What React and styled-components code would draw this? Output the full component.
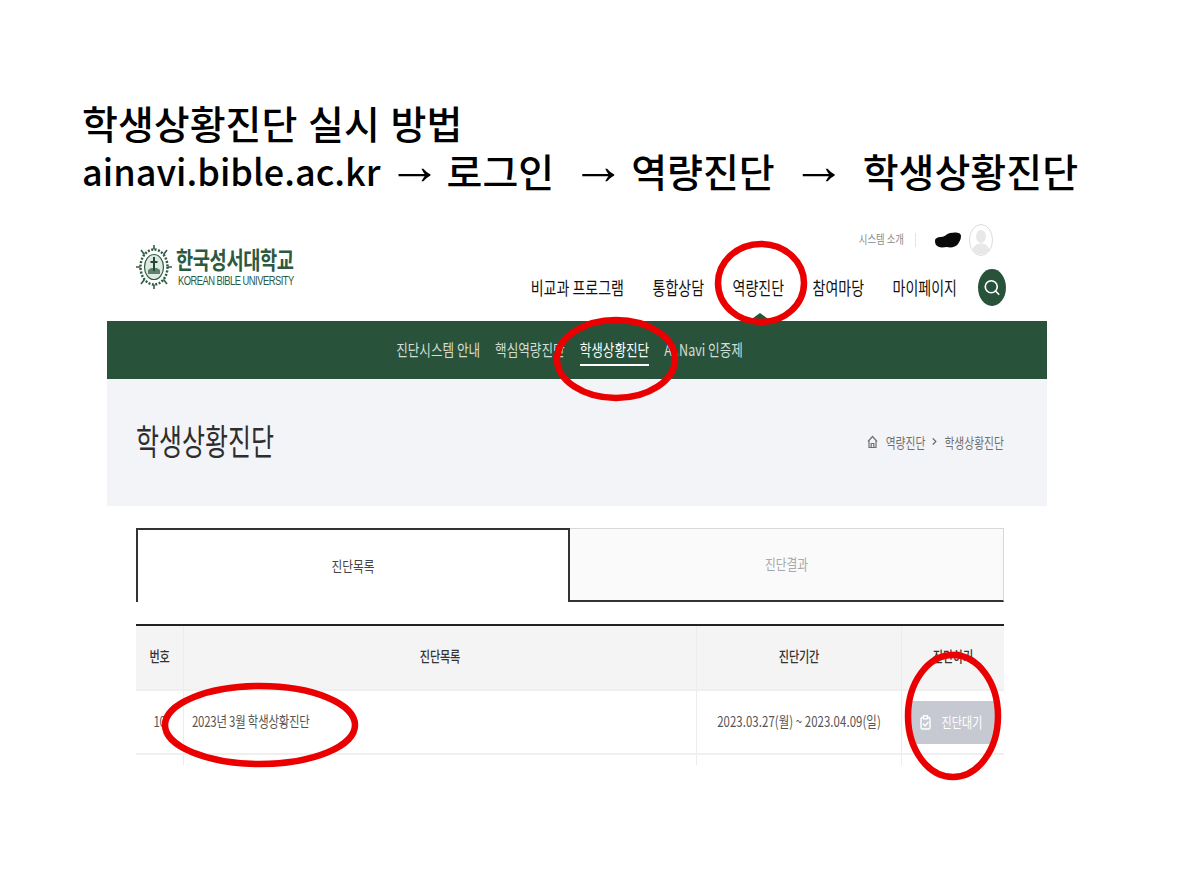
import React from "react";
import styled, { createGlobalStyle, css } from "styled-components";
import { Search, ChevronRight } from "lucide-react";

const GlobalStyle = createGlobalStyle`
  html, body {
    margin: 0;
    padding: 0;
    background: #fff;
  }
  * {
    box-sizing: border-box;
  }
`;

// the pasted capture is stretched vertically, so its text is too
const tall = css`
  display: inline-block;
  transform: scaleY(1.3);
  white-space: nowrap;
`;

const Slide = styled.div`
  position: relative;
  width: 1188px;
  height: 891px;
  overflow: hidden;
  padding-top: 98px;
  font-family: "Noto Sans CJK KR", "Noto Sans", sans-serif;
  color: #000;
`;

const Heading = styled.h1`
  margin: 0 0 0 82px;
  font-size: 39px;
  line-height: 48px;
  font-weight: 500;
  white-space: nowrap;
`;

const HeadLine = styled.div`
  display: flex;
  align-items: center;
  height: 48px;
  word-spacing: 2px;
`;

const HeadPart = styled.span`
  margin-left: ${(p) => p.$left || 0}px;
`;

const HeadUrl = styled.span`
  font-size: 36.1px;
  font-weight: 500;
`;

const HeadArrow = styled.span`
  font-family: "Liberation Sans", sans-serif;
  font-size: 54px;
  line-height: 30px;
  font-weight: 400;
  margin: -10px 0 0 ${(p) => p.$left}px;
`;

const Capture = styled.div`
  width: 940px;
  margin: 28px 0 0 107px;
`;

const Header = styled.header`
  position: relative;
  height: 99px;
  display: flex;
  justify-content: space-between;
  padding: 20px 41px 0 29px;
`;

const Logo = styled.div`
  display: flex;
  align-items: flex-start;
  gap: 4px;
  padding-top: 2px;
`;

const LogoText = styled.div`
  display: flex;
  flex-direction: column;
  color: #2c5a3f;
`;

const LogoKorean = styled.span`
  ${tall}
  font-size: 18.7px;
  line-height: 24px;
  font-weight: 700;
  letter-spacing: -0.4px;
  margin-top: 3px;
`;

const LogoEnglish = styled.span`
  ${tall}
  transform-origin: left center;
  font-family: "Liberation Sans", sans-serif;
  font-size: 9.4px;
  line-height: 12px;
  letter-spacing: -0.52px;
  margin: 4px 0 0 2px;
`;

const HeaderRight = styled.div`
  display: flex;
  flex-direction: column;
  align-items: flex-end;
`;

const Utility = styled.div`
  display: flex;
  align-items: center;
  height: 30px;
  margin: -17px 13px 0 0;
`;

const UtilityLink = styled.span`
  ${tall}
  font-size: 9.4px;
  margin-top: -3px;
  color: #8b8b8b;
`;

const UtilityBar = styled.i`
  width: 1px;
  height: 14px;
  background: #e4e4e4;
  margin: 0 19px 0 11px;
`;

const Nav = styled.nav`
  display: flex;
  align-items: center;
  margin-top: 14px;
`;

const NavItem = styled.a`
  ${tall}
  font-size: 14px;
  line-height: 37px;
  color: #111;
  margin-right: 28.5px;
`;

const SearchButton = styled.button`
  width: 28px;
  height: 37px;
  border: 0;
  padding: 0;
  margin-left: -7.5px;
  border-radius: 50%;
  background: #28533a;
  color: #fff;
  display: flex;
  align-items: center;
  justify-content: center;
`;

const SearchGlyph = styled(Search)`
  width: 18px;
  height: 23px;
`;

const NavCaret = styled.i`
  position: absolute;
  left: 642px;
  bottom: 0;
  width: 0;
  height: 0;
  border-left: 11px solid transparent;
  border-right: 11px solid transparent;
  border-bottom: 8px solid #28533a;
`;

const SubNav = styled.div`
  height: 58px;
  background: #28533a;
  display: flex;
  justify-content: center;
  gap: 15px;
  padding-right: 15px;
`;

const SubItem = styled.a`
  position: relative;
  height: 58px;
  display: flex;
  align-items: center;
  color: ${(p) => (p.$active ? "#fff" : "#d3ddd6")};
  ${(p) =>
    p.$active &&
    css`
      &::after {
        content: "";
        position: absolute;
        left: 0;
        right: 0;
        bottom: 13px;
        height: 2px;
        background: #fff;
      }
    `}
`;

const SubLabel = styled.span`
  ${tall}
  font-size: 12.6px;
  margin-top: -3px;
`;

const TitleBand = styled.div`
  height: 127px;
  background: #f3f4f8;
  display: flex;
  align-items: center;
  justify-content: space-between;
  padding: 0 43px 2px 29px;
`;

const PageTitle = styled.h2`
  ${tall}
  transform: scaleY(1.42);
  margin: -5px 0 0;
  font-size: 25px;
  font-weight: 400;
  color: #2e2e2e;
`;

const Crumbs = styled.div`
  display: flex;
  align-items: center;
  color: #6f6f6f;
`;

const Crumb = styled.span`
  ${tall}
  font-size: 10.8px;
  margin-top: -2px;
`;

const CrumbArrow = styled(ChevronRight)`
  width: 11px;
  height: 13px;
  margin: 0 4px;
`;

const Content = styled.div`
  padding: 22px 43px 0 29px;
`;

const Tabs = styled.div`
  display: grid;
  grid-template-columns: 434px 434px;
  height: 74px;
`;

const Tab = styled.div`
  display: flex;
  align-items: center;
  justify-content: center;
  ${(p) =>
    p.$active
      ? css`
          border: 2px solid #333;
          border-bottom: 0;
          color: #444;
          background: #fff;
        `
      : css`
          border-top: 1px solid #d8d8d8;
          border-right: 1px solid #d8d8d8;
          border-bottom: 2px solid #333;
          color: #a8a8a8;
          background: #fafafa;
        `}
`;

const TabLabel = styled.span`
  ${tall}
  font-size: 11.7px;
  margin-top: -4px;
`;

const Table = styled.div`
  margin-top: 22px;
  border-top: 2px solid #222;
`;

const Row = styled.div`
  display: grid;
  grid-template-columns: 47px 513px 205px 103px;
  height: ${(p) => p.$h}px;
  background: ${(p) => (p.$head ? "#f4f4f4" : "#fff")};
  border-bottom: ${(p) => (p.$last ? "0" : "2px solid #efefef")};
`;

const Cell = styled.div`
  display: flex;
  align-items: center;
  justify-content: ${(p) => (p.$left ? "flex-start" : "center")};
  padding-left: ${(p) => (p.$left ? "8px" : "0")};
  border-left: ${(p) => (p.$first ? "0" : "1px solid #ececec")};
  color: ${(p) => (p.$head ? "#333" : "#555")};
`;

const CellText = styled.span`
  ${tall}
  margin-top: ${(p) => (p.$head ? "-4px" : "-2px")};
  font-size: ${(p) => (p.$head ? "11.2px" : "11.4px")};
  font-weight: ${(p) => (p.$head ? 500 : 400)};
  letter-spacing: ${(p) => p.$spacing ?? -0.2}px;
`;

const ActionButton = styled.button`
  width: 84px;
  height: 43px;
  border: 0;
  padding: 0 4px 0 0;
  background: #c6c8d2;
  color: #fff;
  font-family: inherit;
  display: flex;
  align-items: center;
  justify-content: center;
  gap: 11px;
`;

const ActionLabel = styled.span`
  ${tall}
  font-size: 11.1px;
  margin-top: -1px;
`;

const Annotations = styled.svg`
  position: absolute;
  left: 0;
  top: 0;
  width: 1188px;
  height: 891px;
  pointer-events: none;
`;

const WheelLogo = () => (
  <svg width="36" height="46" viewBox="0 0 36 46" fill="none" stroke="#2f5d43">
    <g strokeWidth="1.6">
      <line x1="18" y1="1" x2="18" y2="45" />
      <line x1="0" y1="23" x2="36" y2="23" />
      <line x1="5" y1="6" x2="31" y2="40" />
      <line x1="31" y1="6" x2="5" y2="40" />
    </g>
    <ellipse cx="18" cy="23" rx="13.5" ry="17.5" fill="#fff" strokeWidth="2.5" strokeDasharray="2 1.5" />
    <ellipse cx="18" cy="23" rx="9.5" ry="12.5" fill="#dfe8e2" strokeWidth="1.2" />
    <path d="M12 30h12v-4l-3-2h-6l-3 2z" fill="#5d8069" stroke="none" />
    <path d="M18 13v14M14.5 18h7" stroke="#1f4a30" strokeWidth="2" />
  </svg>
);

const Avatar = () => (
  <svg width="24" height="32" viewBox="0 0 24 32">
    <ellipse cx="12" cy="16" rx="11.5" ry="15.5" fill="#fff" stroke="#dcdcdc" />
    <ellipse cx="12" cy="12.5" rx="5" ry="6.5" fill="#e8e8e8" />
    <path d="M3.5 26c1.500-5 4.500-6.500 8.500-6.500s7 1.500 8.500 6.500c-2 2.800-5 4.500-8.500 4.500s-6.500-1.700-8.500-4.500z" fill="#e8e8e8" />
  </svg>
);

const Scribble = () => (
  <svg width="26" height="16" viewBox="0 0 26 16" style={{ marginRight: 8 }}>
    <path d="M0 9c0-3 3-4 6-4 4 0 5-3 9-4 5-1 11-1 11 3 0 4-2 6-3 8-2 3-7 4-11 3-3 0-5 1-8 0-3-1-4-3-4-6z" fill="#0a0a0a" />
  </svg>
);

const HomeIcon = () => (
  <svg width="11" height="14" viewBox="0 0 11 14" fill="none" stroke="#6f6f6f" strokeWidth="1.2" style={{ marginRight: 8 }}>
    <path d="M1 6.500 5.500 1.500 10 6.500M2 5.500V12.500H9V5.500M4.200 12.500V8.500H6.800V12.500" />
  </svg>
);

const ClipboardCheck = () => (
  <svg width="11" height="15" viewBox="0 0 11 15" fill="none" stroke="#fff" strokeWidth="1.4">
    <rect x="1" y="2.500" width="9" height="11.500" rx="1.500" />
    <rect x="3.500" y="0.800" width="4" height="3" fill="#c6c8d2" />
    <path d="M3 8.500l2 2.500 3.500-4" />
  </svg>
);

const navItems = ["비교과 프로그램", "통합상담", "역량진단", "참여마당", "마이페이지"];

const subItems = [
  { label: "진단시스템 안내" },
  { label: "핵심역량진단" },
  { label: "학생상황진단", active: true },
  { label: "AI.Navi 인증제" },
];

export default function App() {
  return (
    <>
      <GlobalStyle />
      <Slide>
        <Heading>
          <HeadLine>학생상황진단 실시 방법</HeadLine>
          <HeadLine>
            <HeadUrl>ainavi.bible.ac.kr</HeadUrl>
            <HeadArrow $left={7}>→</HeadArrow>
            <HeadPart $left={5}>로그인</HeadPart>
            <HeadArrow $left={17}>→</HeadArrow>
            <HeadPart $left={6}>역량진단</HeadPart>
            <HeadArrow $left={17}>→</HeadArrow>
            <HeadPart $left={17}>학생상황진단</HeadPart>
          </HeadLine>
        </Heading>

        <Capture>
          <Header>
            <Logo>
              <WheelLogo />
              <LogoText>
                <LogoKorean>한국성서대학교</LogoKorean>
                <LogoEnglish>KOREAN BIBLE UNIVERSITY</LogoEnglish>
              </LogoText>
            </Logo>
            <HeaderRight>
              <Utility>
                <UtilityLink>시스템 소개</UtilityLink>
                <UtilityBar />
                <Scribble />
                <Avatar />
              </Utility>
              <Nav>
                {navItems.map((item) => (
                  <NavItem key={item}>{item}</NavItem>
                ))}
                <SearchButton aria-label="검색">
                  <SearchGlyph strokeWidth={2.2} />
                </SearchButton>
              </Nav>
            </HeaderRight>
            <NavCaret />
          </Header>

          <SubNav>
            {subItems.map((item) => (
              <SubItem key={item.label} $active={item.active}>
                <SubLabel>{item.label}</SubLabel>
              </SubItem>
            ))}
          </SubNav>

          <TitleBand>
            <PageTitle>학생상황진단</PageTitle>
            <Crumbs>
              <HomeIcon />
              <Crumb>역량진단</Crumb>
              <CrumbArrow strokeWidth={2.6} />
              <Crumb>학생상황진단</Crumb>
            </Crumbs>
          </TitleBand>

          <Content>
            <Tabs>
              <Tab $active>
                <TabLabel>진단목록</TabLabel>
              </Tab>
              <Tab>
                <TabLabel>진단결과</TabLabel>
              </Tab>
            </Tabs>

            <Table>
              <Row $head $h={65}>
                <Cell $first $head><CellText $head>번호</CellText></Cell>
                <Cell $head><CellText $head>진단목록</CellText></Cell>
                <Cell $head><CellText $head>진단기간</CellText></Cell>
                <Cell $head><CellText $head>진단하기</CellText></Cell>
              </Row>
              <Row $h={64}>
                <Cell $first><CellText>10</CellText></Cell>
                <Cell $left><CellText>2023년 3월 학생상황진단</CellText></Cell>
                <Cell><CellText $spacing={0.07}>2023.03.27(월) ~ 2023.04.09(일)</CellText></Cell>
                <Cell>
                  <ActionButton>
                    <ClipboardCheck />
                    <ActionLabel>진단대기</ActionLabel>
                  </ActionButton>
                </Cell>
              </Row>
              <Row $last $h={10}>
                <Cell $first />
                <Cell />
                <Cell />
                <Cell />
              </Row>
            </Table>
          </Content>
        </Capture>

        <Annotations viewBox="0 0 1188 891" fill="none" stroke="#ea0000" strokeWidth="6.5">
          <ellipse cx="761" cy="283" rx="43" ry="39" />
          <ellipse cx="616" cy="359" rx="59" ry="39" />
          <ellipse cx="260" cy="725" rx="95" ry="39" />
          <ellipse cx="953" cy="716" rx="45" ry="61" />
        </Annotations>
      </Slide>
    </>
  );
}
